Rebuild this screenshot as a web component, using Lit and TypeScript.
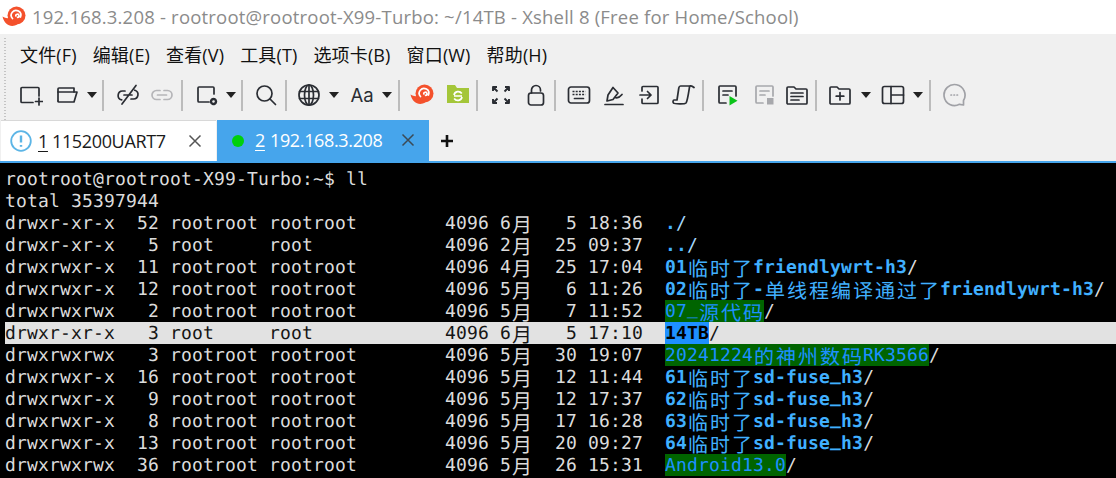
import { LitElement, html, css, svg } from "lit";
import { customElement } from "lit/decorators.js";

const S = (inner: unknown, w = 24, h = 24) =>
  html`<svg width=${w} height=${h} viewBox="0 0 ${w} ${h}" fill="none" stroke="#2a2d33" stroke-width="1.7" stroke-linecap="round" stroke-linejoin="round">${inner}</svg>`;

const snail = (w = 24, h = 24) => html`<svg width=${w} height=${h} viewBox="0 0 24 24"><circle cx="14.500" cy="10.500" r="9" fill="#f4512c"/><path d="M0.500 11.500C4 13.500 6 13.500 7 12.500C9 17 12 18 15.500 19.500C9 23 2.500 20 0.500 11.500Z" fill="#f4512c"/><path d="M10.500 13.500a4.800 4.800 0 1 1 8 -1.500M13.800 11a1.600 1.600 0 1 1 1.800 1.400" fill="none" stroke="#fff" stroke-width="1.700" stroke-linecap="round"/></svg>`;

const icons: Record<string, unknown> = {
  new: S(svg`<path d="M20 13V5.500a1 1 0 0 0-1-1H3a1 1 0 0 0-1 1V18.500a1 1 0 0 0 1 1h11"/><path d="M20 15v7M16.500 18.500h7"/>`),
  open: S(svg`<path d="M3 18V6a1 1 0 0 1 1-1h15v4"/><path d="M3 9h19l-3 10H4a1 1 0 0 1-1-1"/>`),
  linkoff: S(svg`<path d="M9 8H6.500a4.500 4.500 0 0 0-.8 8.900M15 16h2.500a4.500 4.500 0 0 0 1.300-8.800"/><path d="M8 12h8M20 2.500 6 21"/>`),
  link: S(svg`<path d="M10 7.500H6.500a4.500 4.500 0 0 0 0 9H10M14 7.500h3.500a4.500 4.500 0 0 1 0 9H14M7.500 12h9" stroke="#b5b5b8"/>`),
  gear: S(svg`<path d="M19 11V5a1 1 0 0 0-1-1H4a1 1 0 0 0-1 1v13a1 1 0 0 0 1 1h10"/><circle cx="18.500" cy="18.500" r="2.500" stroke-width="2.400" stroke-dasharray="2.200 .3"/>`),
  search: S(svg`<circle cx="10.500" cy="10.500" r="7.500"/><path d="M16 16l5.500 5.500"/>`),
  globe: S(svg`<circle cx="12" cy="12" r="10"/><ellipse cx="12" cy="12" rx="4.500" ry="10"/><path d="M2.500 8.500h19M2.500 15.500h19M12 2v20"/>`),
  aa: html`<span class="aa">Aa</span>`,
  snail: snail(),
  folderE: html`<svg width="24" height="24" viewBox="0 0 24 24"><path d="M1 2h8l2 3h12v15H1Z" fill="#a4c639"/><path d="M8 12a4.300 4.300 0 0 1 7.800-1.500M16 14a4.300 4.300 0 0 1-7.800 1.500M8 13h8" fill="none" stroke="#fff" stroke-width="1.700"/></svg>`,
  full: S(svg`<path d="M4 8V4h4M4 4l4.500 4.500M20 8V4h-4M20 4l-4.500 4.500M4 16v4h4M4 20l4.500-4.500M20 16v4h-4M20 20l-4.500-4.500" stroke-width="1.900" stroke-linecap="butt"/>`),
  lock: S(svg`<rect x="4.500" y="10" width="15" height="12" rx="2.500"/><path d="M7.500 10V7a4.500 4.500 0 0 1 9 0v1"/>`),
  kbd: S(svg`<rect x="1.500" y="4" width="21" height="16" rx="2.500"/><path d="M5.500 8.500h13M5.500 11.500h13" stroke-dasharray="2 1.200" stroke-linecap="butt"/><path d="M7.500 15.500h9"/>`),
  pen: S(svg`<path d="M3 21.500h18"/><path d="M5 18l1-6L11 4.500l5 5.500-5 6.500ZM13 14.500c3 1 5-.5 7-3"/>`),
  enter: S(svg`<path d="M5 8V4.500a1 1 0 0 1 1-1h14a1 1 0 0 1 1 1v15a1 1 0 0 1-1 1H6a1 1 0 0 1-1-1V16"/><path d="M3 12h11M10.500 8.500 14 12l-3.500 3.500"/>`),
  scroll: S(svg`<path d="M1.500 20c1 1 11 1.500 12.500 0 1.500-2 3-13 3.500-16 .3-1.500 2-1.500 4.500 .5M18 3H8.500c-1 0-1.500 1-1.700 2L5 17H2c-1 0-1.300 2-.5 3"/>`),
  play: S(svg`<path d="M10 20H4a1 1 0 0 1-1-1V4a1 1 0 0 1 1-1h15a1 1 0 0 1 1 1v9"/><path d="M7 8h9M7 12h5"/><path d="M13.500 13v9.500l8-4.800Z" fill="#0cc41a" stroke="none"/>`),
  stop: S(svg`<g stroke="#a7a8ac"><path d="M11 20H5a1 1 0 0 1-1-1V4a1 1 0 0 1 1-1h15a1 1 0 0 1 1 1v9"/><path d="M8 8h9M8 12h5"/></g><rect x="15" y="15" width="6.500" height="6.500" fill="#a7a8ac" stroke="none"/>`),
  list: S(svg`<path d="M2 5a1 1 0 0 1 1-1h6l2 2h10a1 1 0 0 1 1 1v13a1 1 0 0 1-1 1H3a1 1 0 0 1-1-1Z"/><path d="M6 10h12M6 13.500h12M6 17h8"/>`),
  addf: S(svg`<path d="M2 5a1 1 0 0 1 1-1h6l2 2h10a1 1 0 0 1 1 1v13a1 1 0 0 1-1 1H3a1 1 0 0 1-1-1Z"/><path d="M12 9.500v7.500M8.200 13.200h7.600"/>`),
  layout: S(svg`<rect x="1.500" y="3.500" width="21" height="17" rx="2"/><path d="M10 3.500v17M10 12h12.500"/>`),
  chat: S(svg`<path d="M21.500 22l-4-.7A10.500 10.500 0 1 1 21.500 17.500Z" stroke="#a0a1a6"/><path d="M9 12h.5M12 12h.5M15 12h.5" stroke="#a0a1a6"/>`),
};

type Item = [string, number];
const tools: Item[] = [
  ["new", 31], ["open", 67], ["arrow", 92], ["sep", 103], ["linkoff", 128], ["link", 162], ["sep", 182],
  ["gear", 207], ["arrow", 231], ["sep", 242], ["search", 266], ["sep", 286], ["globe", 309], ["arrow", 334],
  ["aa", 362], ["arrow", 387], ["sep", 399], ["snail", 422], ["folderE", 458], ["sep", 477], ["full", 501],
  ["lock", 536], ["sep", 555], ["kbd", 579], ["pen", 614], ["enter", 649], ["scroll", 684], ["sep", 703],
  ["play", 728], ["stop", 764], ["list", 797], ["sep", 816], ["addf", 840], ["arrow", 866], ["layout", 893],
  ["arrow", 918], ["sep", 930], ["chat", 954],
];
const widthOf = (t: string) => (t === "sep" ? 2 : t === "arrow" ? 10 : 24);

const menus = ["文件(F)", "编辑(E)", "查看(V)", "工具(T)", "选项卡(B)", "窗口(W)", "帮助(H)"];

type Kind = "dir" | "green" | "sel" | "dot";
type Row = { p: string; name: string; kind: Kind; hi?: boolean };
const a = "drwxr-xr-x", b = "drwxrwxr-x", c = "drwxrwxrwx";
const R = "rootroot rootroot";
const rows: Row[] = [
  { p: `${a}  52 ${R}        4096 6月   5 18:36  `, name: ".", kind: "dot" },
  { p: `${a}   5 root     root            4096 2月  25 09:37  `, name: "..", kind: "dot" },
  { p: `${b}  11 ${R}        4096 4月  25 17:04  `, name: "01临时了friendlywrt-h3", kind: "dir" },
  { p: `${b}  12 ${R}        4096 5月   6 11:26  `, name: "02临时了-单线程编译通过了friendlywrt-h3", kind: "dir" },
  { p: `${c}   2 ${R}        4096 5月   7 11:52  `, name: "07_源代码", kind: "green" },
  { p: `${a}   3 root     root            4096 6月   5 17:10  `, name: "14TB", kind: "sel", hi: true },
  { p: `${c}   3 ${R}        4096 5月  30 19:07  `, name: "20241224的神州数码RK3566", kind: "green" },
  { p: `${b}  16 ${R}        4096 5月  12 11:44  `, name: "61临时了sd-fuse_h3", kind: "dir" },
  { p: `${b}   9 ${R}        4096 5月  12 17:37  `, name: "62临时了sd-fuse_h3", kind: "dir" },
  { p: `${b}   8 ${R}        4096 5月  17 16:28  `, name: "63临时了sd-fuse_h3", kind: "dir" },
  { p: `${b}  13 ${R}        4096 5月  20 09:27  `, name: "64临时了sd-fuse_h3", kind: "dir" },
  { p: `${c}  36 ${R}        4096 5月  26 15:31  `, name: "Android13.0", kind: "green" },
];

const cells = (s: string) =>
  (s.match(/[\u4e00-\u9fff]|_|[^\u4e00-\u9fff_]+/g) || []).map((t) =>
    /[\u4e00-\u9fff]/.test(t)
      ? html`<span class="cjk">${t}</span>`
      : t === "_"
      ? html`<span class="us">_</span>`
      : html`<span>${t}</span>`
  );

@customElement("app-root")
export class AppRoot extends LitElement {
  static styles = css`
    :host { display: block; width: 1116px; height: 478px; overflow: hidden; background: #f0f0f0; font-family: "Open Sans", "Noto Sans CJK SC", sans-serif; }
    .title { height: 34px; background: #fff; display: flex; align-items: center; padding-left: 2px; gap: 6px; color: #8b8b8b; font: 18.500px/34px "Open Sans", sans-serif; letter-spacing: .2px; white-space: nowrap; }
    .title svg { flex: none; }
    .bars { position: relative; height: 86px; background: #f0f0f0; }
    .grip { position: absolute; left: 4px; top: 4px; bottom: 0; width: 2px; background: repeating-linear-gradient(#c4c4c4 0 1px, transparent 1px 3px); }
    .menu { height: 42px; display: flex; align-items: center; padding-left: 20px; gap: 16px; font: 18px/20px "Open Sans", "Noto Sans CJK SC", sans-serif; letter-spacing: .15px; color: #111; white-space: nowrap; }
    .tools { height: 38px; display: flex; align-items: center; }
    .item { flex: none; display: flex; align-items: center; justify-content: center; }
    .sep { width: 2px; height: 31px; background: #9a9a9a; transform: scaleX(.6); }
    .arrow { width: 0; height: 0; border: 5px solid transparent; border-top: 6px solid #222; border-bottom: 0; }
    .aa { font: 18.500px/24px "Inter", sans-serif; color: #2a2d33; white-space: nowrap; }
    .tabs { height: 41px; display: flex; align-items: stretch; font: 18px/41px "Open Sans", sans-serif; }
    .tab { box-sizing: border-box; display: flex; align-items: center; white-space: nowrap; position: relative; letter-spacing: -.35px; }
    .t1 { margin-left: 1px; width: 215px; background: #fff; color: #1a1a1a; border-top: 1px solid #d8d8d8; padding-left: 9px; }
    .t2 { margin-left: 1px; width: 212px; background: #46a5ec; color: #fff; padding-left: 15px; }
    .dot { width: 12px; height: 12px; border-radius: 50%; background: #00d00c; margin-right: 11px; }
    .tab u { text-underline-offset: 3px; margin-right: 5px; }
    .t1 u { margin-right: 4px; }
    .num1 { margin-left: 6px; }
    .x { position: absolute; top: 12px; right: 13px; }
    .plus { margin-left: 11px; align-self: center; display: flex; }
    .stripe { height: 2px; background: #46a5ec; }
    .term { height: 315px; box-sizing: border-box; padding-top: 5px; background: #000; color: #dcdcdc; font: 18px/24px "DejaVu Sans Mono", monospace; letter-spacing: .164px; overflow: hidden; text-rendering: geometricPrecision; }
    .row { height: 22px; padding-left: 5px; white-space: pre; }
    .row.hi { margin-left: 5px; padding-left: 0; background: #e2e2e2; color: #151515; }
    .cjk { display: inline-block; width: 22px; height: 22px; letter-spacing: 0; text-align: center; font: 20px/24px "Noto Sans CJK SC", sans-serif; vertical-align: top; }
    .us { position: relative; top: -3px; }
    .dirn { color: #40b0ff; font-weight: 700; }
    .dirn .cjk { font-weight: 400; }
    .dotn { color: #40b0ff; font-weight: 700; }
    .slash-dot { color: #a6d8fb; }
    .green { display: inline-block; height: 22px; background: #006400; color: #1e90ff; vertical-align: top; }
    .sel { display: inline-block; height: 22px; background: #1e90ff; color: #000; font-weight: 700; vertical-align: top; }
  `;

  private toolbar() {
    let cur = 0;
    return tools.map(([t, center]) => {
      const w = widthOf(t);
      const ml = center - w / 2 - cur;
      cur = center + w / 2;
      const inner = t === "sep" ? html`<div class="sep"></div>` : t === "arrow" ? html`<div class="arrow"></div>` : icons[t];
      return html`<div class="item" style="margin-left:${ml}px;width:${w}px">${inner}</div>`;
    });
  }

  private name(r: Row) {
    if (r.kind === "green") return html`<span class="green">${cells(r.name)}</span>/`;
    if (r.kind === "sel") return html`<span class="sel">${r.name}</span>/`;
    if (r.kind === "dot") return html`<span class="dotn">${r.name}</span><span class="slash-dot">/</span>`;
    return html`<span class="dirn">${cells(r.name)}</span>/`;
  }

  render() {
    const x = (col: string) => html`<svg class="x" width="16" height="16" viewBox="0 0 16 16" stroke=${col} stroke-width="1.500"><path d="M2.500 2.500l11 11M13.500 2.500l-11 11"/></svg>`;
    return html`
      <div class="title">${snail()}<span>192.168.3.208 - rootroot@rootroot-X99-Turbo: ~/14TB - Xshell 8 (Free for Home/School)</span></div>
      <div class="bars">
        <div class="grip"></div>
        <div class="menu">${menus.map((m) => html`<span>${m}</span>`)}</div>
        <div class="tools">${this.toolbar()}</div>
      </div>
      <div class="tabs">
        <div class="tab t1">
          <svg width="22" height="22" viewBox="0 0 22 22"><circle cx="11" cy="11" r="9.800" fill="none" stroke="#5cb5e6" stroke-width="1.800"/><path d="M11 5.500v7M11 15v1.800" stroke="#5cb5e6" stroke-width="2.400"/></svg>
          <u class="num1">1</u>115200UART7${x("#555")}
        </div>
        <div class="tab t2"><span class="dot"></span><u>2</u>192.168.3.208${x("#3c4a55")}</div>
        <div class="plus"><svg width="14" height="14" viewBox="0 0 14 14" stroke="#111" stroke-width="2.600"><path d="M7 1v12M1 7h12"/></svg></div>
      </div>
      <div class="stripe"></div>
      <div class="term"><div class="row">rootroot@rootroot-X99-Turbo:~$ ll</div><div class="row">total 35397944</div>${rows.map((r) => html`<div class="row ${r.hi ? "hi" : ""}">${cells(r.p)}${this.name(r)}</div>`)}</div>
    `;
  }
}
